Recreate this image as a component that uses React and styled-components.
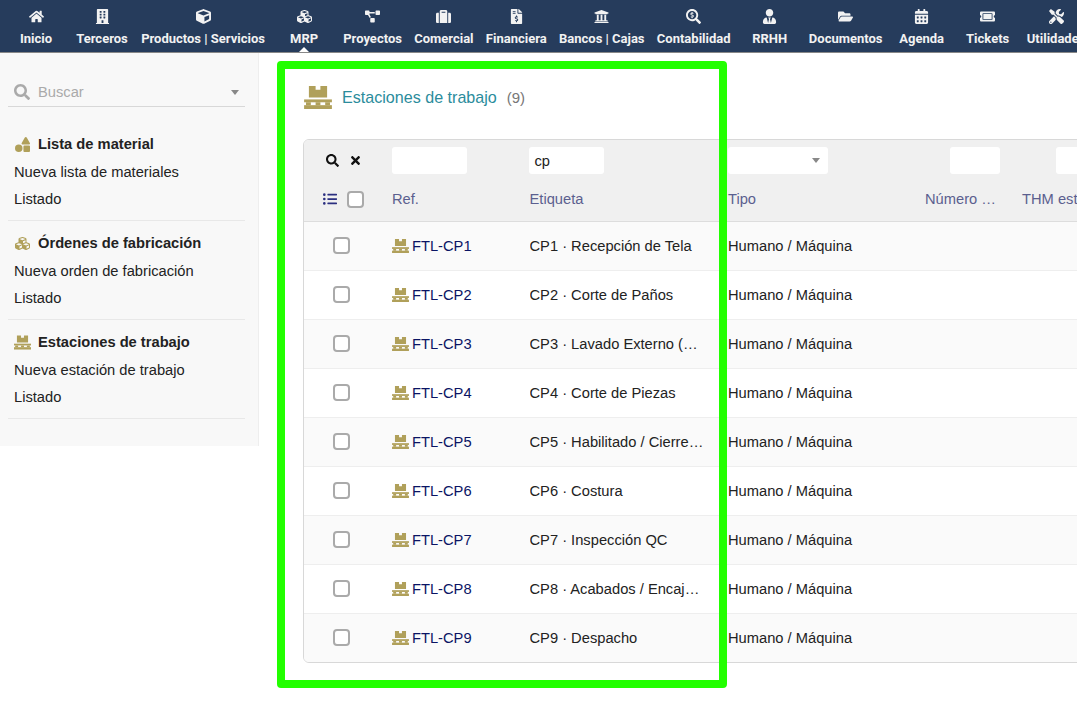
import React from "react";
import styled, { createGlobalStyle } from "styled-components";
import {
  FaHome, FaBuilding, FaCube, FaCubes, FaProjectDiagram, FaSuitcase, FaFileInvoiceDollar,
  FaUniversity, FaSearchDollar, FaUserTie, FaFolderOpen, FaCalendarAlt, FaTicketAlt, FaTools,
  FaSearch, FaTimes, FaListUl, FaShapes,
} from "react-icons/fa";

const GOLD = "#b0a05a";

const GlobalStyle = createGlobalStyle`
  html, body {
    margin: 0;
    padding: 0;
    height: 100%;
    overflow: hidden;
    background: #fff;
    font-family: "Liberation Sans", Arial, sans-serif;
    font-size: 14.7px;
    color: #222;
  }
  * { box-sizing: border-box; }
`;

const Page = styled.div`
  position: relative;
  width: 1077px;
  height: 724px;
  overflow: hidden;
`;

const TopBar = styled.nav`
  display: flex;
  height: 53px;
  padding-left: 3px;
  background: #263c5c;
  border-bottom: 1px solid #888;
`;

const NavItem = styled.a`
  position: relative;
  flex: none;
  min-width: 66px;
  padding: 9px 6.15px 0;
  display: flex;
  flex-direction: column;
  align-items: center;
  gap: 7px;
  color: #f2f2f2;
  font-family: Roboto, sans-serif;
  font-weight: 700;
  font-size: 13px;
  line-height: 16px;
  white-space: nowrap;
  svg { height: 15px; width: auto; }
`;

const ActiveMark = styled.span`
  position: absolute;
  left: 50%;
  bottom: 0;
  margin-left: -5px;
  border: 5px solid transparent;
  border-top: 0;
  border-bottom-color: #fff;
`;

const Body = styled.div`
  display: flex;
  align-items: flex-start;
`;

const Sidebar = styled.aside`
  flex: none;
  width: 259px;
  height: 393px;
  padding: 22px 13px 0 8px;
  background: #f8f8f8;
  border-right: 1px solid #eee;
`;

const SearchBox = styled.div`
  display: flex;
  align-items: center;
  height: 32px;
  padding: 3px 6px 0;
  border-bottom: 1px solid #d8d8d8;
  color: #aaa;
  svg { width: 16px; height: 16px; margin-right: 8px; color: #aaa; }
`;

const Caret = styled.span`
  margin-left: auto;
  border: 4px solid transparent;
  border-bottom: 0;
  border-top: 5px solid #888;
`;

const MenuBlock = styled.div`
  padding: 27px 0 7.5px 6px;
  border-bottom: 1px solid #e8e8e8;
  & + & { padding-top: 12px; }
`;

const MenuTitle = styled.div`
  display: flex;
  align-items: center;
  height: 20px;
  margin-bottom: 5px;
  font-weight: 700;
  color: #222;
  svg { width: 17px; height: 15px; margin-right: 7px; color: ${GOLD}; }
`;

const MenuLink = styled.a`
  display: block;
  height: 26.75px;
  line-height: 26px;
  color: #222;
`;

const Main = styled.main`
  flex: 1;
  min-width: 0;
  padding: 28px 0 0 44px;
`;

const TitleRow = styled.div`
  display: flex;
  align-items: center;
  height: 32px;
  margin-bottom: 26px;
  svg { width: 28px; height: 23px; margin: 0 10px 0 1px; color: ${GOLD}; }
`;

const Title = styled.h1`
  margin: 0;
  font-size: 16.1px;
  font-weight: 400;
  color: #2b8c9c;
`;

const Count = styled.span`
  margin-left: 10px;
  font-size: 15px;
  color: #777;
`;

const Table = styled.div`
  width: 801px;
  border: 1px solid #d8d8d8;
  border-radius: 6px 0 0 6px;
  overflow: hidden;
`;

const COLS = "88px 137.5px 198.5px 197px 97px 83px";

const FilterRow = styled.div`
  display: grid;
  grid-template-columns: ${COLS};
  align-items: center;
  height: 41px;
  background: #f0f0f0;
`;

const HeadRow = styled.div`
  display: grid;
  grid-template-columns: ${COLS};
  align-items: center;
  height: 41px;
  padding-bottom: 4px;
  background: #f0f0f0;
  border-bottom: 1px solid #ddd;
  color: #5b5f8f;
`;

const Row = styled.div`
  display: grid;
  grid-template-columns: ${COLS};
  align-items: center;
  height: 49px;
  background: ${(p) => (p.$odd ? "#fafafa" : "#fff")};
  border-bottom: 1px solid #eee;
  &:last-child { height: 48px; border-bottom: 0; }
`;

const Actions = styled.div`
  display: flex;
  gap: 10px;
  padding-left: 22px;
  color: #111;
  svg { width: 13px; height: 13px; }
`;

const FilterInput = styled.div`
  width: ${(p) => p.$w}px;
  height: 27px;
  display: flex;
  align-items: center;
  padding: 0 8px 0 6px;
  margin-left: ${(p) => p.$ml || 0}px;
  background: #fff;
  border-radius: 3px;
  color: #222;
`;

const HeadTools = styled.div`
  display: flex;
  align-items: center;
  gap: 9px;
  padding-left: 18px;
  svg { width: 16px; height: 14px; color: #2b2f80; }
`;

const Check = styled.span`
  display: block;
  width: 17px;
  height: 17px;
  background: #fff;
  border: 2px solid #aaa;
  border-radius: 4px;
`;

const CheckCell = styled.div`
  display: flex;
  padding: 0 0 2px 29px;
`;

const Ref = styled.a`
  display: flex;
  align-items: center;
  color: #0a1464;
  svg { width: 17px; height: 14px; margin-right: 3px; color: ${GOLD}; }
`;

const Label = styled.div`
  max-width: 175px;
  overflow: hidden;
  text-overflow: ellipsis;
  white-space: pre;
`;

const HeadCell = styled.div`
  white-space: nowrap;
`;

const Highlight = styled.div`
  position: absolute;
  left: 277px;
  top: 61px;
  width: 450px;
  height: 627px;
  border: 8px solid #22ff00;
  border-radius: 4px;
  pointer-events: none;
`;

function PalletIcon() {
  return (
    <svg viewBox="0 0 29 24" fill="currentColor">
      <path d="M5 0h7v4h5V0h7v12H5z" />
      <rect x="0" y="14" width="29" height="3" />
      <path d="M2 17h5v3H2zM12 17h5v3h-5zM22 17h5v3h-5z" />
      <rect x="0" y="20" width="29" height="4" />
    </svg>
  );
}

const navItems = [
  { label: "Inicio", icon: <FaHome /> },
  { label: "Terceros", icon: <FaBuilding /> },
  { label: "Productos | Servicios", icon: <FaCube /> },
  { label: "MRP", icon: <FaCubes />, active: true },
  { label: "Proyectos", icon: <FaProjectDiagram /> },
  { label: "Comercial", icon: <FaSuitcase /> },
  { label: "Financiera", icon: <FaFileInvoiceDollar /> },
  { label: "Bancos | Cajas", icon: <FaUniversity /> },
  { label: "Contabilidad", icon: <FaSearchDollar /> },
  { label: "RRHH", icon: <FaUserTie /> },
  { label: "Documentos", icon: <FaFolderOpen /> },
  { label: "Agenda", icon: <FaCalendarAlt /> },
  { label: "Tickets", icon: <FaTicketAlt /> },
  { label: "Utilidades", icon: <FaTools /> },
];

const menus = [
  { title: "Lista de material", icon: <FaShapes />, link: "Nueva lista de materiales" },
  { title: "Órdenes de fabricación", icon: <FaCubes />, link: "Nueva orden de fabricación" },
  { title: "Estaciones de trabajo", icon: <PalletIcon />, link: "Nueva estación de trabajo" },
];

const rows = [
  ["FTL-CP1", "CP1 · Recepción de Tela"],
  ["FTL-CP2", "CP2 · Corte de Paños"],
  ["FTL-CP3", "CP3 · Lavado Externo (Opcional)"],
  ["FTL-CP4", "CP4 · Corte de Piezas"],
  ["FTL-CP5", "CP5 · Habilitado / Cierre de Piezas"],
  ["FTL-CP6", "CP6 · Costura"],
  ["FTL-CP7", "CP7 · Inspección QC"],
  ["FTL-CP8", "CP8 · Acabados / Encaje Final"],
  ["FTL-CP9", "CP9 · Despacho"],
];

export default function App() {
  return (
    <Page>
      <GlobalStyle />
      <TopBar>
        {navItems.map((item) => (
          <NavItem key={item.label}>
            {item.icon}
            {item.label}
            {item.active && <ActiveMark />}
          </NavItem>
        ))}
      </TopBar>
      <Body>
        <Sidebar>
          <SearchBox>
            <FaSearch />
            Buscar
            <Caret />
          </SearchBox>
          {menus.map((m) => (
            <MenuBlock key={m.title}>
              <MenuTitle>
                {m.icon}
                {m.title}
              </MenuTitle>
              <MenuLink>{m.link}</MenuLink>
              <MenuLink>Listado</MenuLink>
            </MenuBlock>
          ))}
        </Sidebar>
        <Main>
          <TitleRow>
            <PalletIcon />
            <Title>Estaciones de trabajo</Title>
            <Count>(9)</Count>
          </TitleRow>
          <Table>
            <FilterRow>
              <Actions>
                <FaSearch />
                <FaTimes />
              </Actions>
              <FilterInput $w={75} />
              <FilterInput $w={75} $ml={-1}>cp</FilterInput>
              <FilterInput $w={100}>
                <Caret />
              </FilterInput>
              <FilterInput $w={50} $ml={25} />
              <FilterInput $w={50} $ml={34} />
            </FilterRow>
            <HeadRow>
              <HeadTools>
                <FaListUl />
                <Check />
              </HeadTools>
              <HeadCell>Ref.</HeadCell>
              <HeadCell>Etiqueta</HeadCell>
              <HeadCell>Tipo</HeadCell>
              <HeadCell>Número …</HeadCell>
              <HeadCell>THM estimado</HeadCell>
            </HeadRow>
            {rows.map(([ref, label], i) => (
              <Row key={ref} $odd={i % 2 === 0}>
                <CheckCell>
                  <Check />
                </CheckCell>
                <Ref>
                  <PalletIcon />
                  {ref}
                </Ref>
                <Label>{label}</Label>
                <div>Humano / Máquina</div>
              </Row>
            ))}
          </Table>
        </Main>
      </Body>
      <Highlight />
    </Page>
  );
}
